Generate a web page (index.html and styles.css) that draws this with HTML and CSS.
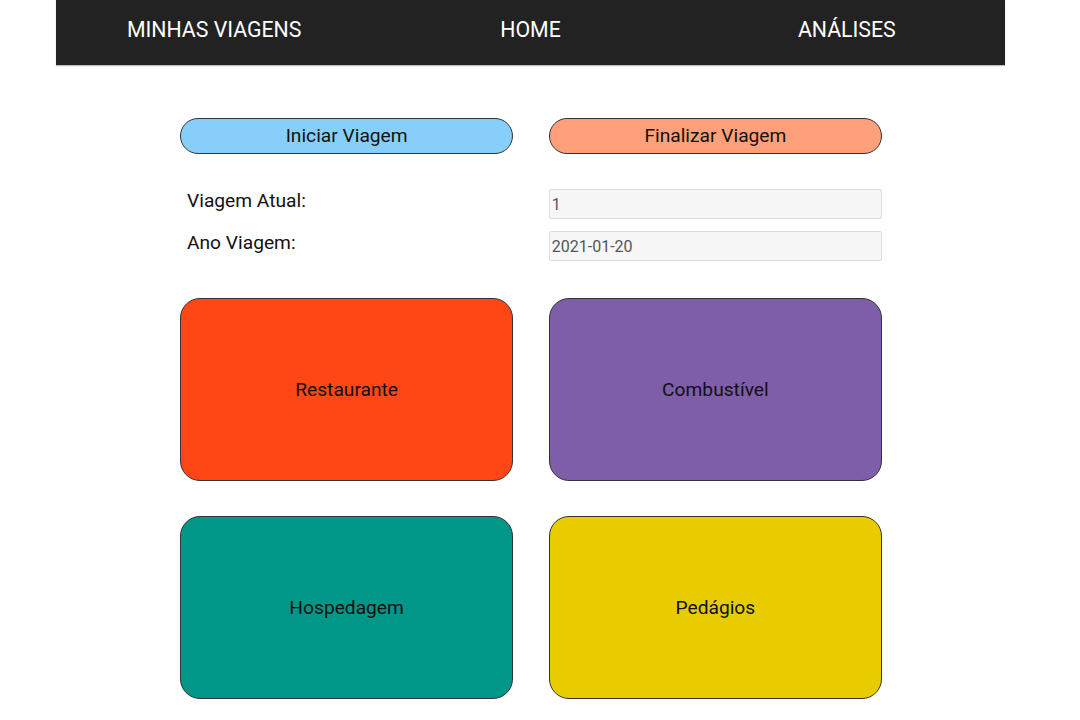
FILE: index.html
```html
<!DOCTYPE html>
<html lang="pt-BR">
<head>
<meta charset="utf-8">
<title>Minhas Viagens</title>
<link rel="stylesheet" href="styles.css">
</head>
<body>
<div class="page">
  <header class="nav">
    <a class="nav-item">MINHAS VIAGENS</a>
    <a class="nav-item">HOME</a>
    <a class="nav-item">ANÁLISES</a>
  </header>
  <main class="main">
    <div class="grid buttons">
      <button class="pill pill-start">Iniciar Viagem</button>
      <button class="pill pill-end">Finalizar Viagem</button>
    </div>
    <div class="grid fields">
      <label class="field-label">Viagem Atual:</label>
      <input class="field-input" type="text" value="1" readonly>
      <label class="field-label">Ano Viagem:</label>
      <input class="field-input" type="text" value="2021-01-20" readonly>
    </div>
    <div class="grid cards">
      <div class="card card-rest">Restaurante</div>
      <div class="card card-fuel">Combustível</div>
      <div class="card card-hotel">Hospedagem</div>
      <div class="card card-toll">Pedágios</div>
    </div>
  </main>
</div>
</body>
</html>
```
FILE: styles.css
```css
* { box-sizing: border-box; }
html, body { margin: 0; padding: 0; background: #fff; }
body { font-family: Roboto, "Liberation Sans", Arial, sans-serif; color: #111; }
.page { width: 949px; margin-left: 56px; }
.nav {
  height: 65px;
  background: #222;
  display: grid;
  grid-template-columns: 1fr 1fr 1fr;
  padding-top: 17px;
  box-shadow: 0 1px 1px rgba(0,0,0,0.25);
}
.nav-item {
  color: #fff;
  font-size: 21.3px;
  line-height: 25px;
  text-align: center;
  text-decoration: none;
}
.main { margin-left: 124px; width: 702px; }
.grid {
  display: grid;
  grid-template-columns: 1fr 1fr;
  column-gap: 35.5px;
}
.buttons { margin-top: 53px; }
.pill {
  height: 36px;
  border: 1px solid #333;
  border-radius: 18px;
  font-family: inherit;
  font-size: 19.2px;
  color: #111;
  padding: 0;
  line-height: 32px;
}
.pill-start { background: #87cefa; }
.pill-end { background: #ffa07a; }
.fields { margin-top: 35px; row-gap: 12px; }
.field-label {
  font-size: 19.2px;
  line-height: 24px;
  padding-left: 7px;
  align-self: start;
}
.field-input {
  height: 30px;
  width: 100%;
  background: #f7f7f7;
  border: 1px solid #ddd;
  border-radius: 2px;
  font-family: inherit;
  font-size: 16px;
  color: #555;
  padding: 0 2px;
  margin: 0;
  outline: none;
}
.cards { margin-top: 37px; row-gap: 35px; }
.card {
  height: 183px;
  border: 1px solid #333;
  border-radius: 20px;
  display: flex;
  align-items: center;
  justify-content: center;
  font-size: 19.2px;
  color: #111;
}
.card-rest { background: #ff4716; }
.card-fuel { background: #7e5ea8; }
.card-hotel { background: #009688; }
.card-toll { background: #e8cc00; }
```
